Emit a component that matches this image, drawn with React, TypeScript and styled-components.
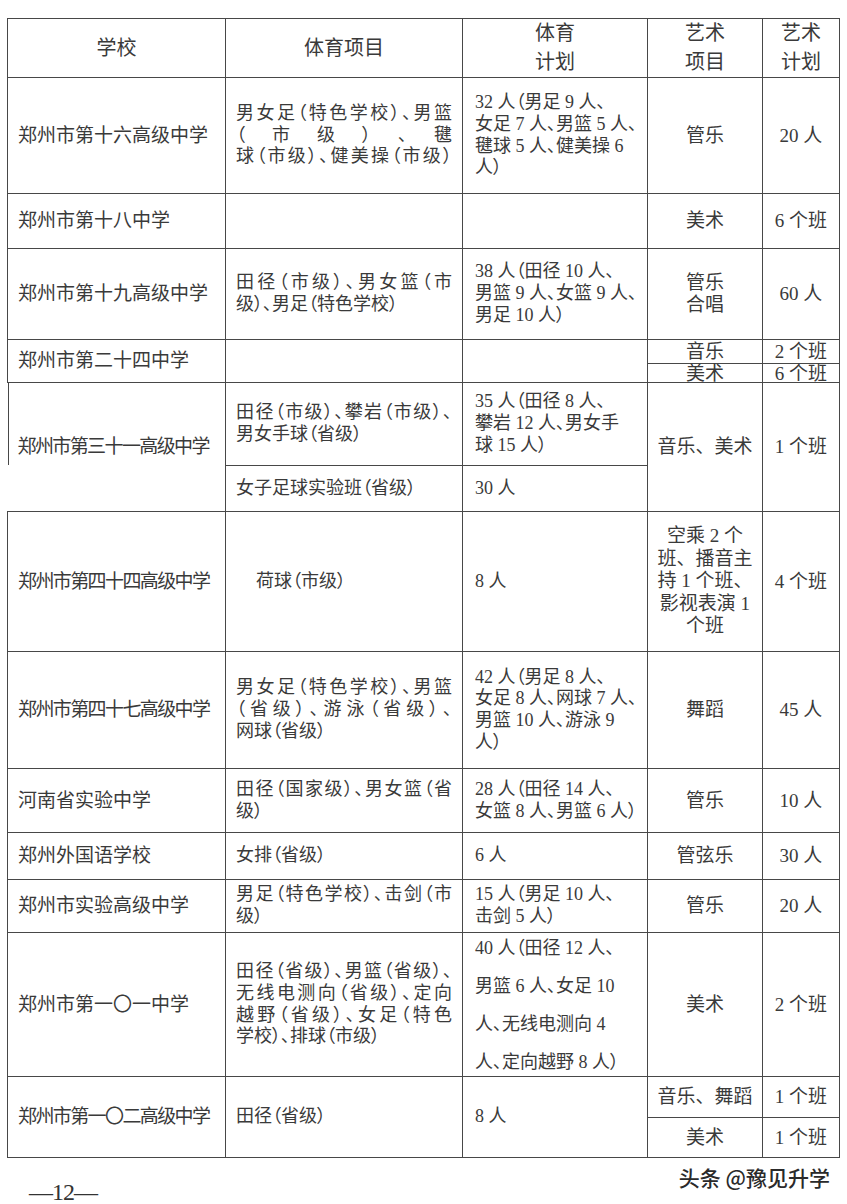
import styled, { createGlobalStyle, css } from 'styled-components'

const GlobalStyle = createGlobalStyle`
  html, body {
    margin: 0;
    padding: 0;
    background: #fff;
  }
  body {
    font-family: "Liberation Serif", "Noto Sans CJK SC", serif;
    color: #3a3a3a;
  }
`

const Page = styled.div`
  width: 847px;
  height: 1204px;
  padding: 18px 0 0 7px;
  box-sizing: border-box;
  overflow: hidden;
`

const Sheet = styled.table`
  width: 832px;
  table-layout: fixed;
  border-collapse: collapse;
`

const Col = styled.col<{ $w: number }>`
  width: ${p => p.$w}px;
`

const Row = styled.tr<{ $h: number }>`
  height: ${p => p.$h}px;
`

const Th = styled.th`
  border: 1px solid #484848;
  padding: 0;
  font-weight: 400;
  font-size: 20px;
  line-height: 29px;
  text-align: center;
  vertical-align: middle;
`

type Kind = 'name' | 'sport' | 'plan' | 'art' | 'count'

const kinds = {
  name: css`
    padding: 0 0 0 10px;
    font-size: 19px;
    text-align: left;
  `,
  sport: css`
    padding: 0 10px;
    font-size: 18px;
    text-align: left;
    font-feature-settings: "palt";
  `,
  plan: css`
    padding: 0 7px 0 12px;
    font-size: 18px;
    text-align: left;
    font-feature-settings: "palt";
  `,
  art: css`
    padding: 0;
    font-size: 19px;
    text-align: center;
  `,
  count: css`
    padding: 0;
    font-size: 19px;
    text-align: center;
  `,
}

const Td = styled.td<{ $kind: Kind; $lh?: number; $tight?: boolean; $broken?: number; $indent?: number }>`
  border: 1px solid #484848;
  vertical-align: middle;
  white-space: nowrap;
  overflow: visible;
  line-height: ${p => p.$lh ?? 21.7}px;
  ${p => kinds[p.$kind]}
  ${p => p.$tight && css`letter-spacing: -1.6px;`}
  ${p => p.$indent && css`text-indent: ${p.$indent}px;`}
  ${p =>
    p.$broken &&
    css`
      border-left: none;
      background: linear-gradient(#484848, #484848) left top / 1px ${p.$broken}px no-repeat;
    `}
`

// widely spaced block of lines that may bleed into the cell's padding area
const Lines = styled.div<{ $trim: number }>`
  margin: -${p => p.$trim}px 0;
`

const Line = styled.div<{ $fill?: boolean }>`
  white-space: nowrap;
  ${p =>
    p.$fill &&
    css`
      text-align: justify;
      text-align-last: justify;
    `}
`

const Footer = styled.div`
  display: flex;
  justify-content: space-between;
  align-items: flex-start;
  padding: 4px 17px 0 22px;
`

const PageNo = styled.div`
  margin-top: 16px;
  font-family: "Liberation Serif", serif;
  font-size: 24px;
  line-height: 28px;
  letter-spacing: -1px;
  color: #333;
`

const Mark = styled.div`
  font-family: "Noto Sans CJK SC", sans-serif;
  font-size: 21px;
  line-height: 30px;
  font-weight: 500;
  color: #2a2a2a;
  text-shadow: 1px 1px 0 #fff, -1px 0 0 #fff, 0 -1px 0 #fff;
`

export default function App() {
  return (
    <>
      <GlobalStyle />
      <Page>
        <Sheet>
          <colgroup>
            <Col $w={218} />
            <Col $w={237} />
            <Col $w={185} />
            <Col $w={115} />
            <Col $w={77} />
          </colgroup>
          <tbody>
            <Row $h={58}>
              <Th>学校</Th>
              <Th>体育项目</Th>
              <Th>体育<br />计划</Th>
              <Th>艺术<br />项目</Th>
              <Th>艺术<br />计划</Th>
            </Row>

            <Row $h={116}>
              <Td $kind="name">郑州市第十六高级中学</Td>
              <Td $kind="sport">
                <Line $fill>男女足（特色学校）、男篮</Line>
                <Line $fill>（市级）、毽</Line>
                <Line $fill>球（市级）、健美操（市级）</Line>
              </Td>
              <Td $kind="plan">
                <Line>32 人（男足 9 人、</Line>
                <Line>女足 7 人、男篮 5 人、</Line>
                <Line>毽球 5 人、健美操 6</Line>
                <Line>人）</Line>
              </Td>
              <Td $kind="art">管乐</Td>
              <Td $kind="count">20 人</Td>
            </Row>

            <Row $h={55}>
              <Td $kind="name">郑州市第十八中学</Td>
              <Td $kind="sport" />
              <Td $kind="plan" />
              <Td $kind="art">美术</Td>
              <Td $kind="count">6 个班</Td>
            </Row>

            <Row $h={91}>
              <Td $kind="name">郑州市第十九高级中学</Td>
              <Td $kind="sport">
                <Line $fill>田径（市级）、男女篮（市</Line>
                <Line>级）、男足（特色学校）</Line>
              </Td>
              <Td $kind="plan">
                <Line>38 人（田径 10 人、</Line>
                <Line>男篮 9 人、女篮 9 人、</Line>
                <Line>男足 10 人）</Line>
              </Td>
              <Td $kind="art">管乐<br />合唱</Td>
              <Td $kind="count">60 人</Td>
            </Row>

            <Row $h={24}>
              <Td $kind="name" rowSpan={2}>郑州市第二十四中学</Td>
              <Td $kind="sport" rowSpan={2} />
              <Td $kind="plan" rowSpan={2} />
              <Td $kind="art" $lh={17}>音乐</Td>
              <Td $kind="count" $lh={17}>2 个班</Td>
            </Row>
            <Row $h={19}>
              <Td $kind="art" $lh={17}>美术</Td>
              <Td $kind="count" $lh={17}>6 个班</Td>
            </Row>

            <Row $h={83}>
              <Td $kind="name" rowSpan={2} $tight $broken={82}>郑州市第三十一高级中学</Td>
              <Td $kind="sport">
                <Line $fill>田径（市级）、攀岩（市级）、</Line>
                <Line>男女手球（省级）</Line>
              </Td>
              <Td $kind="plan">
                <Line>35 人（田径 8 人、</Line>
                <Line>攀岩 12 人、男女手</Line>
                <Line>球 15 人）</Line>
              </Td>
              <Td $kind="art" rowSpan={2}>音乐、美术</Td>
              <Td $kind="count" rowSpan={2}>1 个班</Td>
            </Row>
            <Row $h={46}>
              <Td $kind="sport">女子足球实验班（省级）</Td>
              <Td $kind="plan">30 人</Td>
            </Row>

            <Row $h={140}>
              <Td $kind="name" $tight>郑州市第四十四高级中学</Td>
              <Td $kind="sport" $indent={20}>荷球（市级）</Td>
              <Td $kind="plan">8 人</Td>
              <Td $kind="art" $lh={22.5}>
                <Line>空乘 2 个</Line>
                <Line>班、播音主</Line>
                <Line>持 1 个班、</Line>
                <Line>影视表演 1</Line>
                <Line>个班</Line>
              </Td>
              <Td $kind="count">4 个班</Td>
            </Row>

            <Row $h={117}>
              <Td $kind="name" $tight>郑州市第四十七高级中学</Td>
              <Td $kind="sport">
                <Line $fill>男女足（特色学校）、男篮</Line>
                <Line $fill>（省级）、游泳（省级）、</Line>
                <Line>网球（省级）</Line>
              </Td>
              <Td $kind="plan">
                <Line>42 人（男足 8 人、</Line>
                <Line>女足 8 人、网球 7 人、</Line>
                <Line>男篮 10 人、游泳 9</Line>
                <Line>人）</Line>
              </Td>
              <Td $kind="art">舞蹈</Td>
              <Td $kind="count">45 人</Td>
            </Row>

            <Row $h={64}>
              <Td $kind="name">河南省实验中学</Td>
              <Td $kind="sport">
                <Line $fill>田径（国家级）、男女篮（省</Line>
                <Line>级）</Line>
              </Td>
              <Td $kind="plan">
                <Line>28 人（田径 14 人、</Line>
                <Line>女篮 8 人、男篮 6 人）</Line>
              </Td>
              <Td $kind="art">管乐</Td>
              <Td $kind="count">10 人</Td>
            </Row>

            <Row $h={47}>
              <Td $kind="name">郑州外国语学校</Td>
              <Td $kind="sport">女排（省级）</Td>
              <Td $kind="plan">6 人</Td>
              <Td $kind="art">管弦乐</Td>
              <Td $kind="count">30 人</Td>
            </Row>

            <Row $h={53}>
              <Td $kind="name">郑州市实验高级中学</Td>
              <Td $kind="sport">
                <Line $fill>男足（特色学校）、击剑（市</Line>
                <Line>级）</Line>
              </Td>
              <Td $kind="plan">
                <Line>15 人（男足 10 人、</Line>
                <Line>击剑 5 人）</Line>
              </Td>
              <Td $kind="art">管乐</Td>
              <Td $kind="count">20 人</Td>
            </Row>

            <Row $h={144}>
              <Td $kind="name">郑州市第一〇一中学</Td>
              <Td $kind="sport">
                <Line $fill>田径（省级）、男篮（省级）、</Line>
                <Line $fill>无线电测向（省级）、定向</Line>
                <Line $fill>越野（省级）、女足（特色</Line>
                <Line>学校）、排球（市级）</Line>
              </Td>
              <Td $kind="plan" $lh={38}>
                <Lines $trim={6}>
                  <Line>40 人（田径 12 人、</Line>
                  <Line>男篮 6 人、女足 10</Line>
                  <Line>人、无线电测向 4</Line>
                  <Line>人、定向越野 8 人）</Line>
                </Lines>
              </Td>
              <Td $kind="art">美术</Td>
              <Td $kind="count">2 个班</Td>
            </Row>

            <Row $h={41}>
              <Td $kind="name" rowSpan={2} $tight>郑州市第一〇二高级中学</Td>
              <Td $kind="sport" rowSpan={2}>田径（省级）</Td>
              <Td $kind="plan" rowSpan={2}>8 人</Td>
              <Td $kind="art">音乐、舞蹈</Td>
              <Td $kind="count">1 个班</Td>
            </Row>
            <Row $h={40}>
              <Td $kind="art">美术</Td>
              <Td $kind="count">1 个班</Td>
            </Row>
          </tbody>
        </Sheet>
        <Footer>
          <PageNo>—12—</PageNo>
          <Mark>头条 @豫见升学</Mark>
        </Footer>
      </Page>
    </>
  )
}
